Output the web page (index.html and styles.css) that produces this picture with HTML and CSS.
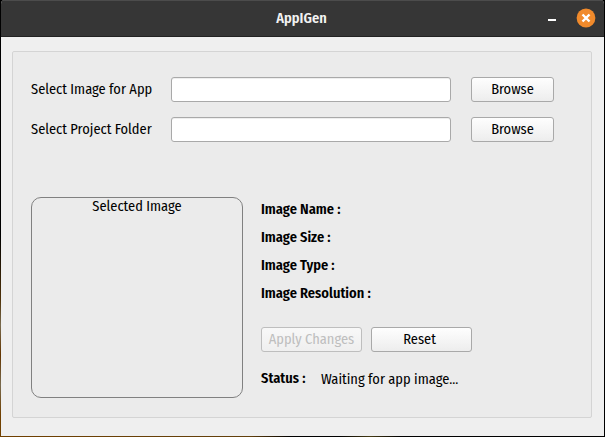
FILE: index.html
```html
<!DOCTYPE html>
<html lang="en">
<head>
<meta charset="utf-8">
<title>AppIGen</title>
<link rel="stylesheet" href="styles.css">
</head>
<body>
<div class="window">
  <header class="titlebar">
    <h1 class="title">AppIGen</h1>
    <div class="controls">
      <svg class="minimize" width="8" height="20" viewBox="0 0 8 20"><path d="M0 11h8v2H0z" fill="#fff"/></svg>
      <svg width="20" height="20" viewBox="0 0 20 20"><circle cx="10" cy="10" r="9.4" fill="#f18a2b"/><path d="M6.5 6.5l7 7M13.5 6.5l-7 7" stroke="#fff" stroke-width="2.4"/></svg>
    </div>
  </header>
  <main class="panel">
    <section class="files">
      <label for="image">Select Image for App</label>
      <input id="image" type="text">
      <button class="browse">Browse</button>
      <label for="folder">Select Project Folder</label>
      <input id="folder" type="text">
      <button class="browse">Browse</button>
    </section>
    <section class="details">
      <div class="preview"><span>Selected Image</span></div>
      <div class="info">
        <div class="row">Image Name :</div>
        <div class="row">Image Size :</div>
        <div class="row">Image Type :</div>
        <div class="row">Image Resolution :</div>
        <div class="actions">
          <button class="apply" disabled>Apply Changes</button>
          <button class="reset">Reset</button>
        </div>
        <div class="status"><b>Status :</b><span>Waiting for app image...</span></div>
      </div>
    </section>
  </main>
</div>
</body>
</html>
```
FILE: styles.css
```css
* { box-sizing: border-box; }
body {
  margin: 0;
  width: 605px;
  height: 437px;
  padding: 0 1px 1px;
  overflow: hidden;
  background: linear-gradient(#000 0 235px, #50330a 300px, #796b4f 325px, #633500 355px, #796b4f 385px, #704000 415px) left / 1px 100% no-repeat, linear-gradient(90deg, #704000 0, #62400c 250px, #000 290px, #000 340px, #453a14 370px, #000 400px) bottom / 100% 1px no-repeat, #000;
  font-family: "Fira Sans Condensed", "Fira Sans", "Noto Sans", sans-serif;
  font-size: 14.4px;
  line-height: 18px;
  color: #000;
}
.window { height: 436px; background: #efefef; border-radius: 4px 4px 0 0; overflow: hidden; }
.titlebar {
  display: grid;
  grid-template-columns: 1fr auto 1fr;
  align-items: center;
  height: 37px;
  background: #363636;
  border-top: 1px solid #4c4c4c;
  border-bottom: 1px solid #222;
}
.title { grid-column: 2; margin: 0 2px 0 0; font-size: 14.4px; font-weight: 600; line-height: 18px; color: #f2f2f2; }
.controls { display: flex; justify-content: flex-end; gap: 20px; padding: 0 8px 1px 0; }
.panel {
  width: 580px;
  height: 367px;
  margin: 14px 0 0 11px;
  padding: 25px 0 0 18px;
  background: #ebebeb;
  border: 1px solid #d4d4d4;
  border-radius: 2px;
}
.files { display: grid; grid-template-columns: 140px 280px 83px; grid-auto-rows: 25px; row-gap: 15px; align-items: center; }
.files button { margin-left: 20px; width: 83px; }
label { white-space: nowrap; }
input { width: 280px; height: 25px; border: 1px solid #a9a9a9; border-radius: 3px; background: #fff; box-shadow: inset 0 1px #eee; }
button {
  height: 25px;
  padding: 0;
  border: 1px solid #a9a9a9;
  border-radius: 3px;
  background: linear-gradient(#fefefe, #ededed);
  font: inherit;
  line-height: 23px;
  white-space: nowrap;
  color: #000;
}
.details { display: flex; gap: 18px; margin-top: 55px; }
.preview { width: 212px; height: 201px; border: 1px solid #808080; border-radius: 10px; text-align: center; }
.row { height: 28px; line-height: 26px; font-weight: 600; white-space: nowrap; }
.actions { display: flex; gap: 9px; margin-top: 18px; }
.actions button { width: 101px; }
.actions .reset { padding-right: 4px; }
.apply:disabled { color: #bebebe; border-color: #bebebe; background: linear-gradient(#f8f8f8, #efefef); }
.status { display: flex; margin-top: 18px; white-space: nowrap; }
.status b { width: 60px; font-weight: 600; }
.status span { margin-top: 1px; }
```
